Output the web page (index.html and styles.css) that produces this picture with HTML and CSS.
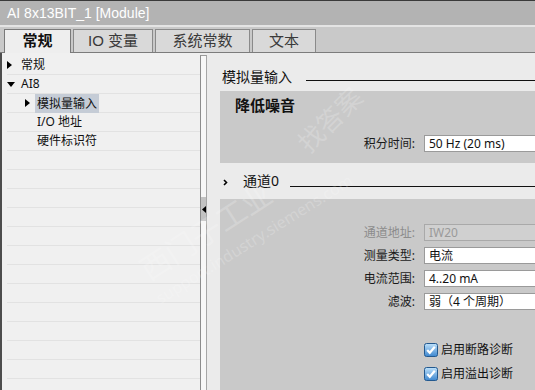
FILE: index.html
```html
<!DOCTYPE html>
<html lang="zh">
<head>
  <meta charset="UTF-8" />
  <title>AI 8x13BIT_1 [Module]</title>
  <link rel="stylesheet" href="styles.css">
</head>
<body>
  <div class="window">
    <div class="titlebar">AI 8x13BIT_1 [Module]</div>

    <div class="tabs">
      <div class="tab tab-general active">常规</div>
      <div class="tab tab-io">IO 变量</div>
      <div class="tab tab-sys">系统常数</div>
      <div class="tab tab-text">文本</div>
    </div>

    <div class="main">
      <div class="tree">
        <div class="row">
          <span class="tw"><svg width="5" height="8" viewBox="0 0 5 8"><polygon points="0,0 5,4 0,8" fill="#000"/></svg></span>常规
        </div>
        <div class="row">
          <span class="tw"><svg width="8" height="5" viewBox="0 0 8 5"><polygon points="0,0 8,0 4,5" fill="#000"/></svg></span>AI8
        </div>
        <div class="row sub">
          <span class="tw"><svg width="5" height="8" viewBox="0 0 5 8"><polygon points="0,0 5,4 0,8" fill="#000"/></svg></span><span class="sel">模拟量输入</span>
        </div>
        <div class="row sub"><span class="tw"></span>I/O 地址</div>
        <div class="row sub"><span class="tw"></span>硬件标识符</div>
        <div class="row"></div>
        <div class="row"></div>
        <div class="row"></div>
        <div class="row"></div>
        <div class="row"></div>
        <div class="row"></div>
        <div class="row"></div>
        <div class="row"></div>
        <div class="row"></div>
        <div class="row"></div>
        <div class="row"></div>
        <div class="row"></div>
      </div>

      <div class="splitter">
        <div class="handle">
          <svg width="4" height="7" viewBox="0 0 4 7"><polygon points="4,0 0,3.5 4,7" fill="#000"/></svg>
        </div>
      </div>

      <div class="content">
        <div class="group-head first">
          <span class="group-title">模拟量输入</span>
          <span class="group-line"></span>
        </div>

        <div class="section noise">
          <div class="section-title">降低噪音</div>
          <div class="field">
            <label>积分时间:</label>
            <div class="input">50 Hz (20 ms)</div>
          </div>
        </div>

        <div class="group-head channel">
          <span class="chev"><svg width="5" height="7" viewBox="0 0 5 7"><polyline points="1,1 3.5,3.5 1,6" fill="none" stroke="#000" stroke-width="1.6"/></svg></span>
          <span class="group-title">通道0</span>
          <span class="group-line"></span>
        </div>

        <div class="section chan">
          <div class="field disabled">
            <label>通道地址:</label>
            <div class="input">IW20</div>
          </div>
          <div class="field">
            <label>测量类型:</label>
            <div class="input">电流</div>
          </div>
          <div class="field">
            <label>电流范围:</label>
            <div class="input">4..20 mA</div>
          </div>
          <div class="field">
            <label>滤波:</label>
            <div class="input">弱（4 个周期）</div>
          </div>

          <div class="checks">
            <div class="check">
              <svg class="cb" width="14" height="14" viewBox="0 0 14 14">
                <defs>
                  <linearGradient id="cbg" x1="0" y1="0" x2="0" y2="1">
                    <stop offset="0" stop-color="#bfe2fb"/>
                    <stop offset="1" stop-color="#3c86cf"/>
                  </linearGradient>
                </defs>
                <rect x="0.5" y="0.5" width="13" height="13" rx="2" fill="url(#cbg)" stroke="#23598f"/>
                <polyline points="3.2,7 5.8,9.8 10.8,3.8" fill="none" stroke="#fff" stroke-width="2.2"/>
              </svg>
              <span>启用断路诊断</span>
            </div>
            <div class="check">
              <svg class="cb" width="14" height="14" viewBox="0 0 14 14">
                <rect x="0.5" y="0.5" width="13" height="13" rx="2" fill="url(#cbg)" stroke="#23598f"/>
                <polyline points="3.2,7 5.8,9.8 10.8,3.8" fill="none" stroke="#fff" stroke-width="2.2"/>
              </svg>
              <span>启用溢出诊断</span>
            </div>
          </div>
        </div>
      </div>
    </div>

    <div class="wm wm-cn">西门子工业</div>
    <div class="wm wm-find">找答案</div>
    <div class="wm wm-url">support.industry.siemens.com</div>
  </div>
</body>
</html>
```

FILE: styles.css
```css
body {
  margin: 0;
  width: 535px;
  height: 390px;
  overflow: hidden;
  font-family: "Noto Sans", "Noto Sans CJK SC", sans-serif;
  font-size: 12px;
  color: #111;
  background: #ececec;
}

.window {
  position: relative;
  display: flex;
  flex-direction: column;
  height: 390px;
  overflow: hidden;
}

.titlebar {
  height: 24px;
  border-top: 1px solid #3a3a3a;
  border-bottom: 2px solid #e4e4e4;
  background: #b3b3b3;
  color: #fff;
  font-family: "Liberation Sans", "Noto Sans CJK SC", sans-serif;
  font-size: 14px;
  line-height: 24px;
  padding-left: 7px;
}

/* tab strip */
.tabs {
  height: 25px;
  background: #c9c9c9;
  border-bottom: 1px solid #7c7c7c;
  display: flex;
  align-items: flex-end;
  padding-left: 4px;
  gap: 2px;
}

.tab {
  box-sizing: border-box;
  height: 23px;
  border: 1px solid #8a8a8a;
  border-bottom: none;
  background: #d9d9d9;
  color: #3a3a3a;
  font-family: "Liberation Sans", "Noto Sans CJK SC", sans-serif;
  font-size: 15px;
  line-height: 21px;
  text-align: center;
}

.tab.active {
  height: 24px;
  margin-bottom: -1px;
  background: #eeeeee;
  color: #111;
  font-weight: bold;
  border-color: #7a7a7a;
}

.tab-general { width: 67px; }
.tab-io { width: 80px; }
.tab-sys { width: 95px; }
.tab-text { width: 64px; }

.main {
  flex: 1;
  display: flex;
  min-height: 0;
}

/* navigation tree */
.tree {
  width: 198px;
  border-left: 2px solid #4d4d4d;
  background: #f0f0f0;
  padding-top: 3px;
  overflow: hidden;
}

.row {
  box-sizing: border-box;
  height: 19px;
  margin-left: 5px;
  border-bottom: 1px solid #e2e2e2;
  display: flex;
  align-items: center;
  line-height: 18px;
  white-space: nowrap;
}

.tw {
  width: 14px;
  display: flex;
  align-items: center;
}

.row.sub .tw {
  margin-left: 18px;
  width: 12px;
}

.sel {
  background: #c5ccd6;
  margin-left: -2px;
  padding: 0 2px;
  line-height: 19px;
  margin-bottom: -1px;
}

/* splitter */
.splitter {
  box-sizing: border-box;
  width: 7px;
  border-left: 1px solid #8c8c8c;
  border-right: 1px solid #a6a6a6;
  border-top: 1px solid #9a9a9a;
  margin-top: 2px;
  background: #f7f7f7;
}

.handle {
  margin-top: 141px;
  height: 24px;
  background: #c2c2c2;
  display: flex;
  align-items: center;
  justify-content: center;
}

/* property area */
.content {
  width: 328px;
  box-sizing: border-box;
  padding-left: 13px;
  background: #ebebeb;
  overflow: hidden;
}

.group-head {
  display: flex;
  align-items: center;
  font-size: 14px;
  line-height: 16px;
}

.group-head.first {
  height: 28px;
  margin-top: 10px;
  padding-left: 2px;
}

.group-head.first .group-line {
  margin-left: 14px;
  margin-top: 7px;
}

.group-head.channel {
  height: 36px;
  padding-left: 3px;
}

.group-head.channel .group-title {
  margin-left: 15px;
}

.group-head.channel .group-line {
  margin-left: 11px;
  margin-top: 11px;
}

.chev {
  display: flex;
  margin-top: 2px;
}

.group-line {
  flex: 1;
  height: 0;
  border-top: 1px solid #111;
}

.section {
  background: #c9c9c9;
  box-sizing: border-box;
}

.section.noise {
  height: 72px;
  padding-top: 6px;
}

.section-title {
  font-size: 15px;
  font-weight: bold;
  line-height: 16px;
  padding-left: 15px;
}

.section.noise .field {
  margin-top: 22px;
}

.section.chan {
  height: 200px;
  padding-top: 25px;
  display: flex;
  flex-direction: column;
  gap: 6px;
}

.field {
  display: grid;
  grid-template-columns: 195px 130px;
  column-gap: 9px;
  align-items: center;
  height: 17px;
}

.field label {
  text-align: right;
  line-height: 17px;
  color: #1a1a1a;
}

.input {
  box-sizing: border-box;
  height: 17px;
  border: 1px solid #9a9a9a;
  background: #fff;
  padding-left: 4px;
  line-height: 15px;
  white-space: nowrap;
}

.field.disabled label {
  color: #8c8c8c;
}

.field.disabled .input {
  background: #d0d0d0;
  border-color: #a9a9a9;
  color: #9a9a9a;
}

.checks {
  margin-top: 27px;
  padding-left: 204px;
  display: flex;
  flex-direction: column;
  gap: 10px;
}

.check {
  display: flex;
  align-items: center;
  gap: 3px;
  height: 14px;
  line-height: 14px;
}

/* faint watermark over the panel */
.wm {
  position: absolute;
  color: rgba(255, 255, 255, 0.2);
  white-space: nowrap;
  pointer-events: none;
}

.wm-cn {
  left: 130px;
  top: 208px;
  font-size: 30px;
  transform: rotate(-33deg);
}

.wm-find {
  left: 290px;
  top: 100px;
  font-size: 26px;
  transform: rotate(-45deg);
}

.wm-url {
  left: 140px;
  top: 228px;
  font-size: 16px;
  transform: rotate(-32deg);
}
```
